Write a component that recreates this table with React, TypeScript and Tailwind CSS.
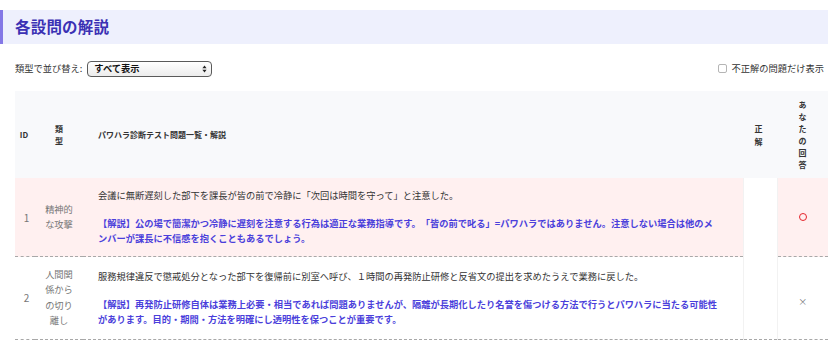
import React from 'react';

type Row = {
  id: number;
  category: string;
  question: string;
  explanation: string;
  answer: 'ok' | 'ng';
  wrong: boolean;
};

const rows: Row[] = [
  {
    id: 1,
    category: '精神的な攻撃',
    question: '会議に無断遅刻した部下を課長が皆の前で冷静に「次回は時間を守って」と注意した。',
    explanation:
      '【解説】公の場で簡潔かつ冷静に遅刻を注意する行為は適正な業務指導です。「皆の前で叱る」=パワハラではありません。注意しない場合は他のメンバーが課長に不信感を抱くこともあるでしょう。',
    answer: 'ok',
    wrong: true,
  },
  {
    id: 2,
    category: '人間関係からの切り離し',
    question: '服務規律違反で懲戒処分となった部下を復帰前に別室へ呼び、１時間の再発防止研修と反省文の提出を求めたうえで業務に戻した。',
    explanation:
      '【解説】再発防止研修自体は業務上必要・相当であれば問題ありませんが、隔離が長期化したり名誉を傷つける方法で行うとパワハラに当たる可能性があります。目的・期間・方法を明確にし透明性を保つことが重要です。',
    answer: 'ng',
    wrong: false,
  },
];

const SelectArrows = () => (
  <svg width="5" height="8" viewBox="0 0 5 8" className="shrink-0">
    <path d="M2.5 0.5 L4.6 3.2 L0.4 3.2 Z" fill="#222" />
    <path d="M2.5 7.5 L4.6 4.8 L0.4 4.8 Z" fill="#222" />
  </svg>
);

export default function App() {
  return (
    <div className="min-h-screen w-[828px] bg-white pt-[10px] font-['Noto_Sans_CJK_JP',sans-serif] text-[#333] [text-spacing-trim:space-all]">
      {/* 見出し */}
      <div className="flex h-[34px] items-center border-l-[3px] border-[#8478e6] bg-[#eef0fd] pl-[12px]">
        <h2 className="text-[15.5px] font-bold tracking-[0.2px] text-[#3b31b4]">各設問の解説</h2>
      </div>

      {/* 並び替え・フィルタ */}
      <div className="mt-[17px] mb-[15px] flex h-[15px] items-center justify-between pl-[15px] pr-[4px]">
        <div className="flex items-center text-[9.25px]">
          <span>類型で並び替え:</span>
          <div className="ml-[5px] flex h-[16px] w-[125px] items-center justify-between rounded-[4px] border border-[#5a5a5a] bg-gradient-to-b from-white to-[#ececec] pl-[6px] pr-[4px]">
            <span className="font-bold text-[#111]">すべて表示</span>
            <SelectArrows />
          </div>
        </div>
        <label className="flex items-center gap-[5px] text-[9.25px] text-[#333]">
          <span className="block h-[9px] w-[9px] rounded-[2px] border border-[#b5b5b5] bg-white" />
          <span>不正解の問題だけ表示</span>
        </label>
      </div>

      {/* 一覧 */}
      <table className="ml-[15px] w-[813px] table-fixed border-collapse">
        <colgroup>
          <col className="w-[20px]" />
          <col className="w-[48px]" />
          <col className="w-[660px]" />
          <col className="w-[34px]" />
          <col className="w-[51px]" />
        </colgroup>
        <thead>
          <tr className="h-[87px] bg-[#f8f9fb] text-[8px] font-bold text-[#333]">
            <th className="pr-[2px] text-center align-middle">ID</th>
            <th className="text-center align-middle">
              <span className="inline-block w-[9px] break-all leading-[12px]">類型</span>
            </th>
            <th className="pl-[15px] text-left align-middle">パワハラ診断テスト問題一覧・解説</th>
            <th className="pr-[3px] text-center align-middle">
              <span className="inline-block w-[9px] break-all leading-[13px]">正解</span>
            </th>
            <th className="text-center align-middle">
              <span className="inline-block w-[9px] break-all leading-[12px]">あなたの回答</span>
            </th>
          </tr>
        </thead>
        <tbody>
          {rows.map((r) => (
            <tr key={r.id} className={r.wrong ? 'bg-[#fff0f0]' : 'bg-white'}>
              <td className="border-b border-dashed border-[#a8a8a8] pl-[3px] text-center align-middle text-[10px] text-[#777]">
                {r.id}
              </td>
              <td className="border-b border-dashed border-[#a8a8a8] px-[8px] py-[10px] text-center align-middle text-[9.25px] leading-[15.4px] text-[#777]">
                {r.category}
              </td>
              <td className="border-b border-dashed border-[#a8a8a8] py-[10px] pl-[15px] pr-[24px] align-middle text-[9.25px] leading-[15px]">
                <p className="text-[#333]">{r.question}</p>
                <p className="mt-[13px] font-semibold text-[#4b3fdb]">{r.explanation}</p>
              </td>
              <td
                className={
                  r.wrong
                    ? 'border-x border-[#f2f2f2] bg-white'
                    : 'border-x border-b border-x-[#f2f2f2] border-b-[#a8a8a8] [border-bottom-style:dashed] [border-left-style:solid] [border-right-style:solid]'
                }
              />
              <td className="border-b border-dashed border-[#a8a8a8] text-center align-middle">
                {r.answer === 'ok' ? (
                  <span className="mx-auto block h-[8px] w-[8px] rounded-full border-[1.5px] border-[#e5242b]" />
                ) : (
                  <span className="text-[9px] text-[#777]">×</span>
                )}
              </td>
            </tr>
          ))}
        </tbody>
      </table>
    </div>
  );
}
